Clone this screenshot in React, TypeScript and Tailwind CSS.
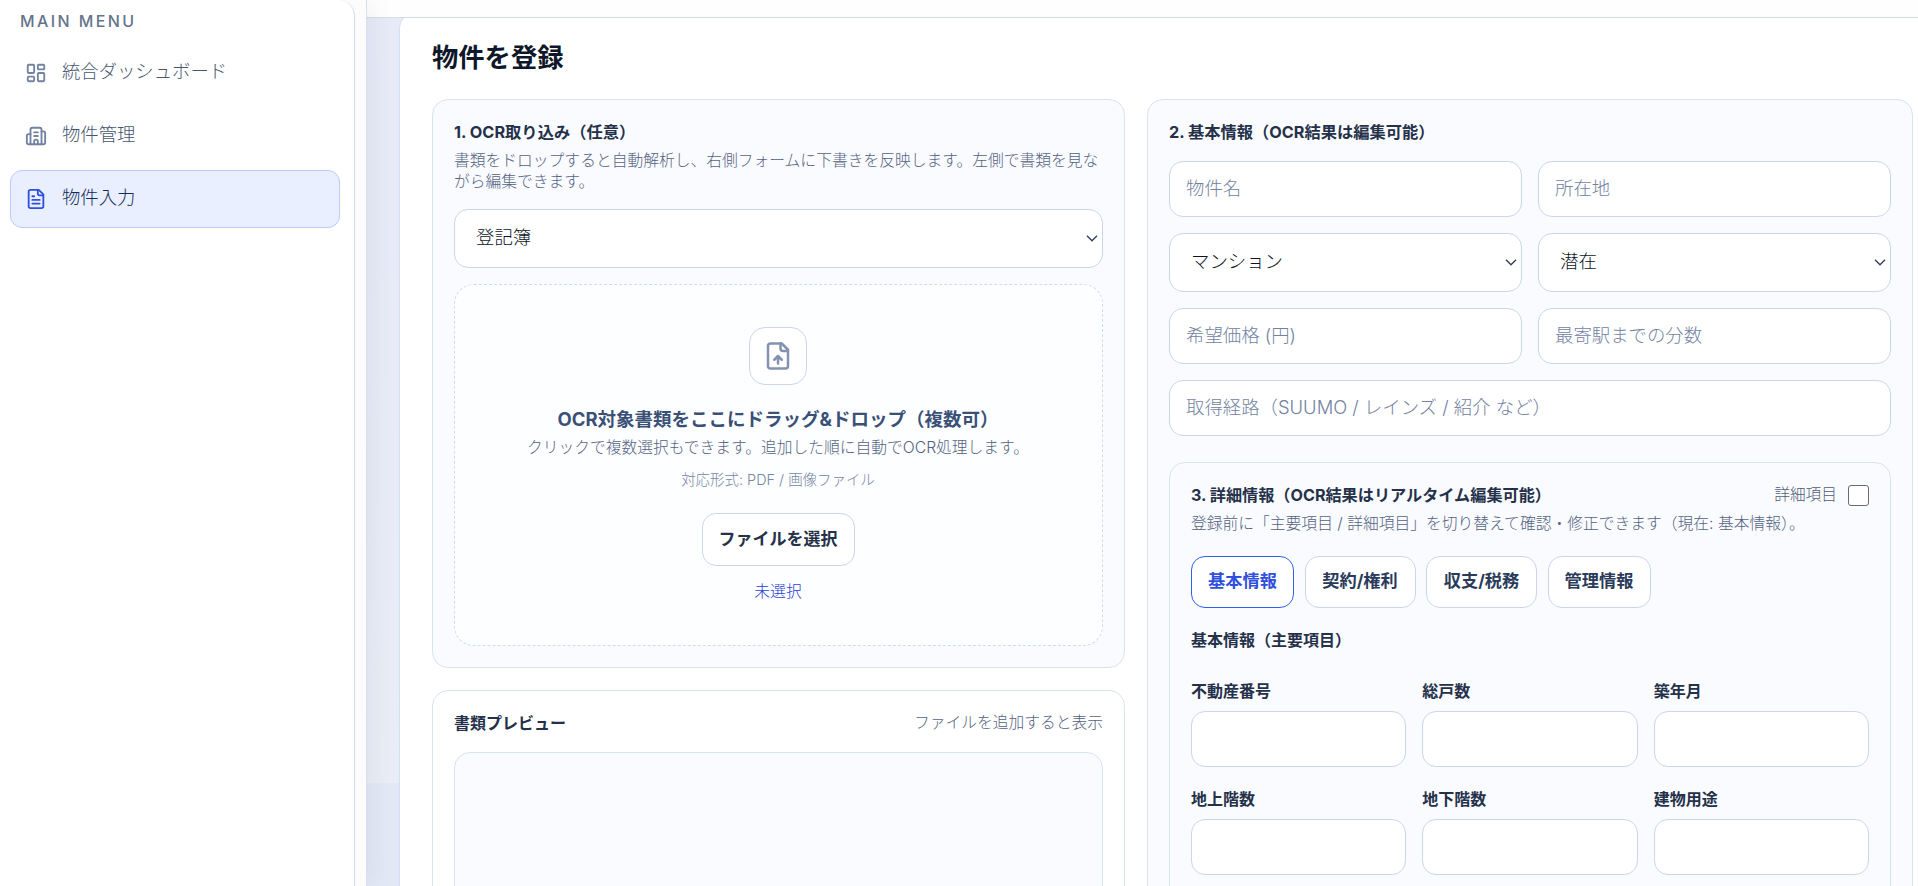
import type { ReactNode } from 'react';
import { Building2, LayoutDashboard } from 'lucide-react';

const menuItems = [
  { label: '統合ダッシュボード', icon: <LayoutDashboard size={22} />, active: false },
  { label: '物件管理', icon: <Building2 size={22} />, active: false },
  { label: '物件入力', icon: <FileIcon size={22} lines="M10 9H8M16 13H8M16 17H8" />, active: true },
];

const tabs = [
  { label: '基本情報', width: 'w-[103px]' },
  { label: '契約/権利', width: 'w-[111px]' },
  { label: '収支/税務', width: 'w-[111px]' },
  { label: '管理情報', width: 'w-[103px]' },
];

const detailFields = ['不動産番号', '総戸数', '築年月', '地上階数', '地下階数', '建物用途'];

export default function App() {
  return (
    <div className="flex h-[886px] w-full overflow-hidden bg-[linear-gradient(to_bottom,#e7eaf7_0px,#e9edf6_783px,#e3e8f6_783px)] font-['Inter','Noto_Sans_CJK_JP',sans-serif] font-light text-[#243149]">
      <Sidebar />
      <div className="flex min-w-0 flex-1 flex-col">
        <header className="relative z-10 h-[18px] shrink-0 border-b border-[#d3dcec] bg-[#fefefe]" />
        <main className="-mt-[5px] ml-[32px] flex-1 rounded-tl-2xl border-l border-[#d6dff2] bg-white pl-8">
          <h1 className="mt-[26px] h-[38px] text-[26.3px] leading-[38px] font-bold text-[#0f172a]">物件を登録</h1>
          <div className="mt-[22px] flex w-[1481px] items-start gap-[22px]">
            <div className="flex w-[693px] shrink-0 flex-col gap-[22px]">
              <OcrPanel />
              <PreviewPanel />
            </div>
            <BasicInfoPanel />
          </div>
        </main>
      </div>
    </div>
  );
}

function Sidebar() {
  return (
    <aside className="relative z-20 flex w-[367px] shrink-0 border-r border-[#d8e0ee] bg-[#fcfcfd] shadow-[6px_0_24px_rgba(15,23,42,0.05)]">
      <nav className="w-[355px] rounded-tr-2xl border-r border-[#d3ddf0] bg-white pr-[14px] pl-[10px]">
        <p className="mt-[9px] ml-[10px] h-6 text-[16px] leading-6 font-medium tracking-[2.4px] text-[#64748b]">MAIN MENU</p>
        <ul className="mt-[11px] flex flex-col gap-[5px]">
          {menuItems.map(({ label, icon, active }) => (
            <li
              key={label}
              className={`flex h-[58px] items-center gap-[15px] rounded-xl border pl-[14px] text-[18.35px] ${
                active ? 'border-[#bccbf8] bg-[#e9effe] text-[#132b58]' : 'border-transparent text-[#46566f]'
              }`}
            >
              <span className={active ? 'text-[#2f50dc]' : 'text-[#7183a0]'}>{icon}</span>
              <span className="-mt-0.5">{label}</span>
            </li>
          ))}
        </ul>
      </nav>
    </aside>
  );
}

function FileIcon({ size, lines }: { size: number; lines: string }) {
  return (
    <svg
      width={size}
      height={size}
      viewBox="0 0 24 24"
      fill="none"
      stroke="currentColor"
      strokeWidth="2"
      strokeLinecap="round"
      strokeLinejoin="round"
    >
      <path d="M15 2H6a2 2 0 0 0-2 2v16a2 2 0 0 0 2 2h12a2 2 0 0 0 2-2V7Z" />
      <path d="M14 2v4a2 2 0 0 0 2 2h4" />
      <path d={lines} />
    </svg>
  );
}

function OcrPanel() {
  return (
    <section className="h-[569px] rounded-2xl border border-[#d9e2f3] bg-[#fafbff] px-[21px] pt-[20px]">
      <h2 className="h-6 text-[16.3px] leading-6 font-bold">1. OCR取り込み（任意）</h2>
      <p className="mt-[6px] text-[15.77px] leading-[21px] text-[#53637f]">
        書類をドロップすると自動解析し、右側フォームに下書きを反映します。左側で書類を見ながら編集できます。
      </p>
      <div className="mt-[17px]">
        <SelectBox value="登記簿" />
      </div>
      <div className="mt-4 flex h-[362px] flex-col items-center rounded-[20px] border border-dashed border-[#d2daec] bg-[#fdfeff] pr-px pt-[42px]">
        <div className="flex size-[58px] items-center justify-center rounded-2xl border border-[#c9d6ed] bg-white text-[#8292b0]">
          <FileIcon size={30} lines="M12 12v6M15 15l-3-3-3 3" />
        </div>
        <p className="mt-[20px] h-7 text-[18.5px] leading-7 font-bold text-[#3a5076]">
          OCR対象書類をここにドラッグ&amp;ドロップ（複数可）
        </p>
        <p className="mt-[3px] h-6 text-[15.75px] leading-6 text-[#53637f]">
          クリックで複数選択もできます。追加した順に自動でOCR処理します。
        </p>
        <p className="mt-[8px] h-6 text-[14.45px] leading-6 text-[#7686a3]">対応形式: PDF / 画像ファイル</p>
        <button className="mt-[21px] h-[53px] w-[153px] rounded-[14px] border border-[#c9d6ed] bg-white text-[17px] font-bold">
          ファイルを選択
        </button>
        <p className="mt-[14px] h-6 text-[15.8px] leading-6 text-[#1f41d6]">未選択</p>
      </div>
    </section>
  );
}

function PreviewPanel() {
  return (
    <section className="h-[320px] rounded-2xl border border-[#d9e2f3] bg-white px-[21px] pt-[20px]">
      <div className="flex h-6 items-center justify-between">
        <h2 className="text-[16px] font-bold">書類プレビュー</h2>
        <span className="text-[15.75px] text-[#53637f]">ファイルを追加すると表示</span>
      </div>
      <div className="mt-[17px] h-[240px] rounded-2xl border border-[#d9e2f3] bg-[#fafbff]" />
    </section>
  );
}

function BasicInfoPanel() {
  return (
    <section className="h-[900px] w-[766px] rounded-2xl border border-[#d9e2f3] bg-[#fafbff] px-[21px] pt-[20px]">
      <h2 className="h-6 text-[16.25px] leading-6 font-bold">2. 基本情報（OCR結果は編集可能）</h2>
      <div className="mt-[17px] grid grid-cols-2 gap-4">
        <TextBox placeholder="物件名" />
        <TextBox placeholder="所在地" />
        <SelectBox value="マンション" />
        <SelectBox value="潜在" />
        <TextBox placeholder="希望価格 (円)" />
        <TextBox placeholder="最寄駅までの分数" />
        <div className="col-span-2">
          <TextBox placeholder="取得経路（SUUMO / レインズ / 紹介 など）" />
        </div>
      </div>
      <DetailCard />
    </section>
  );
}

function DetailCard() {
  return (
    <div className="mt-[26px] h-[600px] rounded-2xl border border-[#d9e2f3] bg-[#fafbff] px-[21px] pt-[20px]">
      <div className="flex h-6 items-center justify-between">
        <h3 className="text-[16.15px] font-bold">3. 詳細情報（OCR結果はリアルタイム編集可能）</h3>
        <label className="flex items-center gap-[11px] text-[15.7px] text-[#4d5d78]">
          詳細項目
          <span className="mt-0.5 size-[21px] rounded-[3px] border border-[#6b6b6b] bg-white" />
        </label>
      </div>
      <p className="mt-[5px] h-6 text-[15.78px] leading-6 text-[#53637f]">
        登録前に「主要項目 / 詳細項目」を切り替えて確認・修正できます（現在: 基本情報）。
      </p>
      <div className="mt-[20px] flex gap-[10.5px]">
        {tabs.map(({ label, width }, i) => (
          <Tab key={label} width={width} active={i === 0}>
            {label}
          </Tab>
        ))}
      </div>
      <h4 className="mt-[20px] h-6 text-[16px] leading-6 font-bold">基本情報（主要項目）</h4>
      <div className="mt-[27px] grid grid-cols-3 gap-x-4 gap-y-5">
        {detailFields.map((field) => (
          <label key={field} className="flex flex-col gap-2 text-[16px] leading-6 font-bold">
            {field}
            <TextBox />
          </label>
        ))}
      </div>
    </div>
  );
}

function Tab({ active, width, children }: { active: boolean; width: string; children: ReactNode }) {
  return (
    <button
      className={`h-[52px] rounded-[14px] border bg-white pb-0.5 text-[17.2px] font-bold ${width} ${
        active ? 'border-[#2f62e8] text-[#2f50dc]' : 'border-[#c9d6ed] text-[#2a3b5a]'
      }`}
    >
      {children}
    </button>
  );
}

function TextBox({ placeholder }: { placeholder?: string }) {
  return (
    <input
      type="text"
      placeholder={placeholder}
      className="block h-[56px] w-full min-w-0 rounded-[14px] border border-[#c9d6ed] bg-white px-4 pb-[3px] text-[18.4px] font-light placeholder:text-[#72829f]"
    />
  );
}

function SelectBox({ value }: { value: string }) {
  return (
    <div className="flex h-[59px] items-center justify-between rounded-[14px] border border-[#c9d6ed] bg-white pr-[4px] pl-[21px] text-[18.4px] text-[#0b1426]">
      <span className="-mt-px">{value}</span>
      <svg width="12" height="7" viewBox="0 0 12 7" fill="none" stroke="#334155" strokeWidth="1.4">
        <path d="M1 0.8l5 5 5-5" />
      </svg>
    </div>
  );
}
